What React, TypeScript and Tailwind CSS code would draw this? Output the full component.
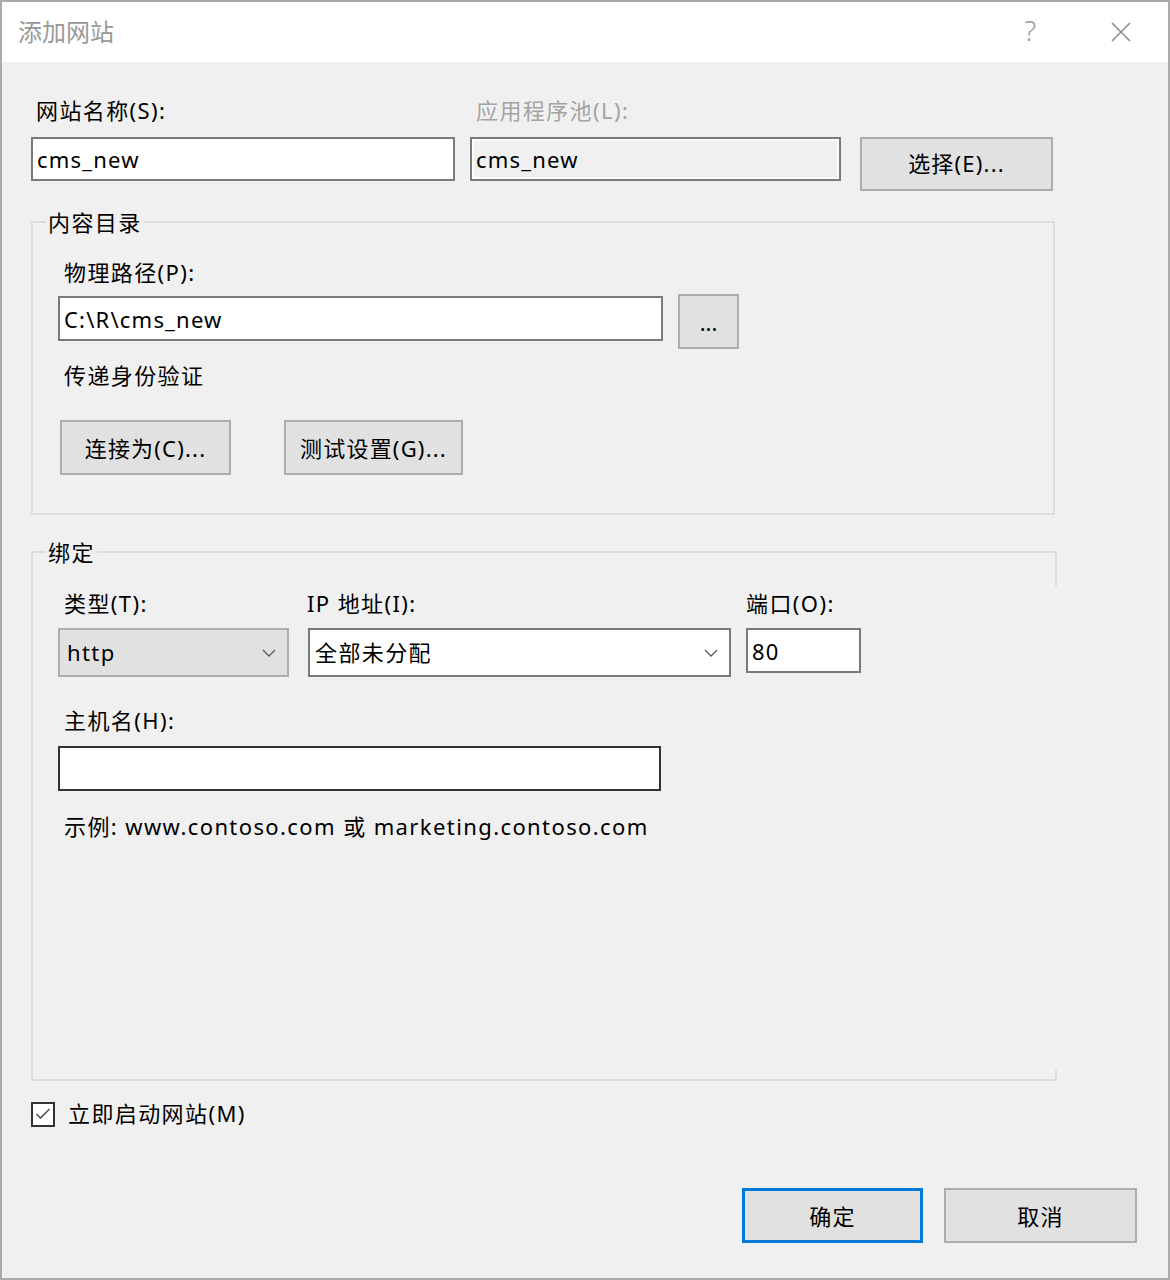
import React from 'react';
import clsx from 'clsx';

const font = "font-['Noto_Sans','Noto_Sans_CJK_SC',sans-serif]";

function Label({
  children,
  className,
}: {
  children: React.ReactNode;
  className?: string;
}) {
  return (
    <div className={clsx('leading-[30px] whitespace-nowrap', className)}>
      {children}
    </div>
  );
}

function TextBox({
  value,
  className,
}: {
  value: string;
  className?: string;
}) {
  return (
    <input
      defaultValue={value}
      className={clsx(
        'block bg-white border-2 border-[#7a7a7a] px-[4px] outline-none text-black tracking-[1.2px]',
        className,
      )}
    />
  );
}

function Button({
  children,
  className,
}: {
  children: React.ReactNode;
  className?: string;
}) {
  return (
    <button
      type="button"
      className={clsx(
        'flex items-center justify-center bg-[#e1e1e1] border-2 border-[#adadad] text-black leading-none whitespace-nowrap tracking-[1.2px]',
        className,
      )}
    >
      {children}
    </button>
  );
}

function Chevron() {
  return (
    <svg width="14" height="8" viewBox="0 0 14 8" className="shrink-0">
      <polyline
        points="1,1 7,7 13,1"
        fill="none"
        stroke="#5c5c5c"
        strokeWidth="1.3"
      />
    </svg>
  );
}

function Combo({
  value,
  className,
}: {
  value: string;
  className?: string;
}) {
  return (
    <div
      className={clsx(
        'flex items-center border-2 pr-[11px] whitespace-nowrap',
        className,
      )}
    >
      <span className="flex-1">{value}</span>
      <Chevron />
    </div>
  );
}

export default function App() {
  return (
    <div
      className={clsx(
        'w-[1170px] h-[1280px] border-2 border-[#ababab] bg-[#f0f0f0] flex flex-col text-[22px] tracking-[1.4px] text-black',
        font,
      )}
    >
      <header className="h-[60px] shrink-0 bg-white flex items-center pl-[16px] pr-[37px] tracking-normal">
        <span className="text-[24px] text-[#999999] leading-none">添加网站</span>
        <span className="ml-auto text-[28px] text-[#9a9a9a] font-light leading-none -mt-[4px]">
          ?
        </span>
        <svg width="20" height="20" viewBox="0 0 20 20" className="ml-[75px]">
          <path d="M1 1 L19 19 M19 1 L1 19" stroke="#8c8c8c" strokeWidth="1.6" />
        </svg>
      </header>

      <main className="flex-1 flex flex-col px-[29px] pt-[33px] pb-[35px]">
        <div className="flex items-start">
          <div className="w-[424px]">
            <Label className="pl-[5px]">网站名称(S):</Label>
            <TextBox value="cms_new" className="mt-[12px] w-full h-[44px]" />
          </div>
          <div className="ml-[15px] w-[371px]">
            <Label className="pl-[6px] text-[#a3a3a3]">应用程序池(L):</Label>
            <input
              readOnly
              defaultValue="cms_new"
              className="block mt-[12px] w-full h-[44px] bg-[#f0f0f0] border-2 border-[#7a7a7a] shadow-[inset_0_0_0_2px_#ffffff] px-[4px] outline-none text-black tracking-[1.2px]"
            />
          </div>
          <Button className="ml-[19px] mt-[42px] w-[193px] h-[54px] pb-[2px]">选择(E)...</Button>
        </div>

        <fieldset className="mt-[16px] w-[1024px] border-2 border-[#dcdcdc]">
          <legend className="ml-[13px] px-[2px] leading-[30px] -mt-[3px]">内容目录</legend>
          <div className="pt-[20px] pl-[25px] pb-[38px]">
            <Label className="pl-[6px]">物理路径(P):</Label>
            <div className="mt-[7px] flex items-start">
              <TextBox value="C:\R\cms_new" className="mt-[2px] w-[605px] h-[45px]" />
              <Button className="ml-[15px] w-[61px] h-[55px] tracking-normal">...</Button>
            </div>
            <Label className="mt-[11px] pl-[6px]">传递身份验证</Label>
            <div className="mt-[30px] pl-[2px] flex gap-[53px]">
              <Button className="w-[171px] h-[55px]">连接为(C)...</Button>
              <Button className="w-[179px] h-[55px]">测试设置(G)...</Button>
            </div>
          </div>
        </fieldset>

        <fieldset className="mt-[22px] w-[1024px] border-2 border-r-0 border-[#dcdcdc]">
          <legend className="ml-[13px] px-[2px] leading-[30px]">绑定</legend>
          <div className="relative h-[512px] pt-[21px] pl-[25px]">
            <div className="absolute right-[-2px] top-[-16px] w-[2px] h-[35px] bg-[#dcdcdc]" />
            <div className="absolute right-[-2px] top-[503px] w-[2px] h-[11px] bg-[#dcdcdc]" />
            <div className="flex items-start">
              <div className="w-[231px]">
                <Label className="pl-[6px]">类型(T):</Label>
                <Combo
                  value="http"
                  className="mt-[10px] h-[49px] bg-[#e1e1e1] border-[#adadad] pl-[7px]"
                />
              </div>
              <div className="ml-[19px] w-[423px]">
                <Label className="-ml-[1px]">IP 地址(I):</Label>
                <Combo
                  value="全部未分配"
                  className="mt-[10px] h-[49px] bg-white border-[#7a7a7a] pl-[5px]"
                />
              </div>
              <div className="ml-[15px] w-[115px]">
                <Label>端口(O):</Label>
                <TextBox value="80" className="mt-[10px] w-full h-[45px]" />
              </div>
            </div>
            <Label className="mt-[28px] pl-[6px]">主机名(H):</Label>
            <input className="block mt-[11px] w-[603px] h-[45px] bg-white border-2 border-[#333333] outline-none" />
            <Label className="mt-[20px] pl-[6px]">
              示例: www.contoso.com 或 marketing.contoso.com
            </Label>
          </div>
        </fieldset>

        <label className="mt-[19px] flex items-center">
          <span className="w-[24px] h-[25px] border-2 border-[#333333] bg-white flex items-center justify-center">
            <svg width="16" height="14" viewBox="0 0 16 14">
              <polyline
                points="1.5,7 5.5,11 14.5,2"
                fill="none"
                stroke="#555555"
                strokeWidth="1.6"
              />
            </svg>
          </span>
          <span className="ml-[13px] leading-[30px] -mt-[2px]">立即启动网站(M)</span>
        </label>

        <div className="mt-auto mr-[2px] flex justify-end gap-[21px]">
          <Button className="w-[181px] h-[55px] !border-[3px] !border-[#0078d7]">确定</Button>
          <Button className="w-[193px] h-[55px]">取消</Button>
        </div>
      </main>
    </div>
  );
}
